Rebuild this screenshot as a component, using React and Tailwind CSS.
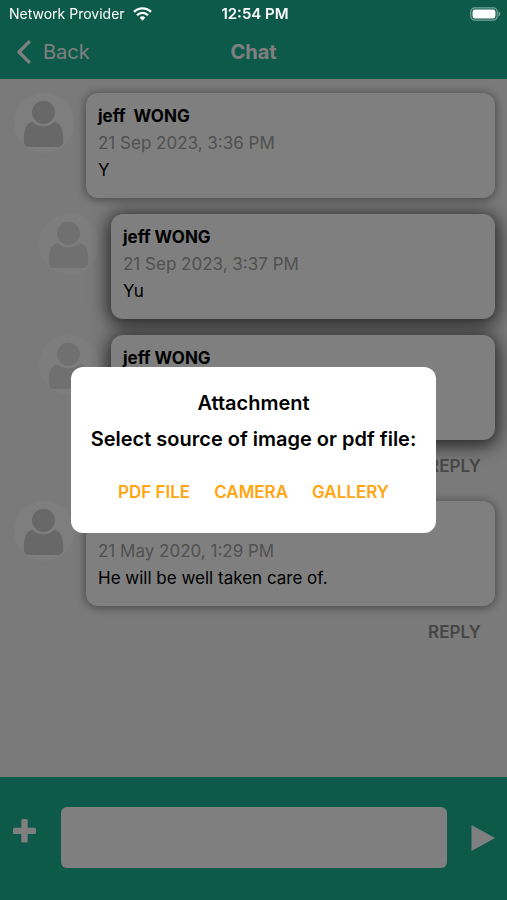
import clsx from "clsx"

const messages = [
  { id: 1, name: "jeff  WONG", date: "21 Sep 2023, 3:36 PM", text: "Y" },
  { id: 2, name: "jeff WONG", date: "21 Sep 2023, 3:37 PM", text: "Yu", nested: true },
  { id: 3, name: "jeff WONG", date: "", text: "", nested: true, reply: true },
  { id: 4, name: "", date: "21 May 2020, 1:29 PM", text: "He will be well taken care of.", reply: true },
]

const StatusBar = () => {
  return (
    /* Stays above the dimmed backdrop */
    <div className="fixed inset-x-0 top-0 z-20 grid h-7 grid-cols-3 items-center pl-[9px] pr-[6px] text-white">
      <div className="flex items-center gap-2 text-sm whitespace-nowrap">
        <span>Network Provider</span>
        <svg width="19" height="14" viewBox="0 0 19 14" fill="none" stroke="currentColor">
          <path d="M1 4.9a12 12 0 0 1 17 0" strokeWidth="2.4" />
          <path d="M4 8.2a7.8 7.8 0 0 1 11 0" strokeWidth="2.3" />
          <path d="M6.6 10.6a4.1 4.1 0 0 1 5.8 0L9.5 13.8z" fill="currentColor" stroke="none" />
        </svg>
      </div>
      <span className="text-center text-[15px] font-semibold">12:54 PM</span>
      <svg className="justify-self-end" width="31" height="14" viewBox="0 0 31 14">
        <rect x="0.8" y="0.8" width="26.4" height="12.4" rx="4" fill="none" stroke="#fff" strokeOpacity="0.45" strokeWidth="1.2" />
        <rect x="2.5" y="2.5" width="23" height="9" rx="2.4" fill="#fff" />
        <path d="M28.6 4.6c2.2.8 2.2 4 0 4.8z" fill="#fff" fillOpacity="0.5" />
      </svg>
    </div>
  )
}

const Header = () => {
  return (
    <header className="bg-[#1ab494] pt-[26px] pb-0.5 text-white">
      <div className="grid h-[51px] grid-cols-3 items-center px-4 text-xl">
        <button type="button" className="flex items-center gap-3">
          <svg width="15" height="24" viewBox="0 0 15 24" fill="none" stroke="currentColor" strokeWidth="3.2" strokeLinejoin="round">
            <path d="M13.800 1.200L3 12l10.800 10.800" />
          </svg>
          Back
        </button>
        <h1 className="text-center font-bold">Chat</h1>
      </div>
    </header>
  )
}

const Avatar = ({ faded }) => {
  return (
    <svg className="h-[60px] w-[60px] shrink-0" viewBox="0 0 60 60">
      <circle cx="30" cy="30" r="30" fill={faded ? "#fafafa" : "#fdfdfd"} />
      <g fill={faded ? "#e0e0e0" : "#d0d0d0"}>
        <circle cx="29.5" cy="19.300" r="11.500" />
        <path d="M18.500 29c3 2.800 6.500 4.200 11 4.200s8-1.400 11-4.200c5.700.6 8.700 7 8.700 16v3c0 4-2 6-6 6H15.800c-4 0-6-2-6-6v-3c0-9 3-15.400 8.700-16z" />
      </g>
    </svg>
  )
}

const Message = ({ name, date, text, nested, reply }) => {
  return (
    <>
      <article className={clsx("flex gap-3", nested && "pl-[25px]")}>
        <Avatar faded={nested} />
        <div
          className={clsx(
            "min-h-[105px] grow rounded-xl bg-white px-3 pt-2.5 pb-3.5 text-[17px]/[27px]",
            nested ? "shadow-[0_3px_18px_3px_rgba(0,0,0,0.7)]" : "shadow-[0_1px_8px_1px_rgba(0,0,0,0.4)]"
          )}
        >
          <p className="min-h-[27px] font-bold whitespace-pre">{name}</p>
          <p className="text-[#a2a2a2]">{date}</p>
          <p>{text}</p>
        </div>
      </article>
      {reply && (
        <div className="flex justify-end pr-3.5 pb-2">
          <button type="button" className="text-[17px]/[21px] font-semibold text-[#8c8c8c]">REPLY</button>
        </div>
      )}
    </>
  )
}

const Composer = () => {
  return (
    <footer className="flex items-center bg-[#1ab494] px-3 pt-[30px] pb-8 text-white">
      <button type="button" aria-label="Add attachment" className="mt-3 self-start">
        <svg width="25" height="24" viewBox="0 0 25 24" fill="currentColor">
          <rect x="9.300" y="0" width="6.400" height="23.500" rx="1.600" />
          <rect x="1" y="8.700" width="23" height="6.300" rx="1.600" />
        </svg>
      </button>
      <input type="text" aria-label="Message" className="mx-6 h-[61px] min-w-0 grow rounded-md bg-white px-3 text-black outline-none" />
      <button type="button" aria-label="Send">
        <svg width="24" height="26" viewBox="0 0 24 26" fill="currentColor">
          <path d="M0.500 0L24 13 0.500 26z" />
        </svg>
      </button>
    </footer>
  )
}

const AttachmentDialog = () => {
  return (
    <div className="fixed inset-0 z-10 flex items-center justify-center bg-black/50 px-4">
      <div role="dialog" aria-labelledby="attachment-title" className="rounded-xl bg-white px-5 pt-[18px] pb-[30px] text-center">
        <h2 id="attachment-title" className="text-xl/[36px] font-semibold">Attachment</h2>
        <p className="text-xl/[36px] font-semibold">Select source of image or pdf file:</p>
        <div className="mt-6 flex justify-center gap-6 text-[17px]/[22px] font-semibold text-[#ffa50f]">
          <button type="button">PDF FILE</button>
          <button type="button">CAMERA</button>
          <button type="button">GALLERY</button>
        </div>
      </div>
    </div>
  )
}

const App = () => {
  return (
    <div className="flex min-h-screen flex-col bg-[#f4f4f4] font-[Inter,sans-serif] text-black">
      <StatusBar />
      <Header />
      {/* Messages */}
      <main className="flex grow flex-col gap-4 pt-3.5 pr-3 pl-3.5">
        {messages.map((m) => (
          <Message key={m.id} {...m} />
        ))}
      </main>
      <Composer />
      <AttachmentDialog />
    </div>
  )
}

export default App
